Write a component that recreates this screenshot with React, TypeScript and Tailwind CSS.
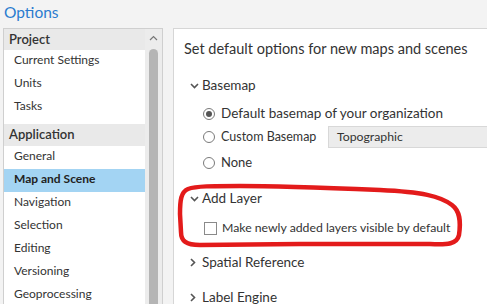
import React from 'react';

const navGroups = [
  { title: 'Project', items: ['Current Settings', 'Units', 'Tasks'] },
  {
    title: 'Application',
    items: ['General', 'Map and Scene', 'Navigation', 'Selection', 'Editing', 'Versioning', 'Geoprocessing'],
  },
];

const ChevronDown = () => (
  <svg width="9" height="6" viewBox="0 0 9 6" className="shrink-0">
    <path d="M1 1 L4.5 4.5 L8 1" fill="none" stroke="#555" strokeWidth="1.6" />
  </svg>
);

const ChevronRight = () => (
  <svg width="6" height="9" viewBox="0 0 6 9" className="shrink-0">
    <path d="M1 1 L4.5 4.5 L1 8" fill="none" stroke="#555" strokeWidth="1.6" />
  </svg>
);

const Radio = ({ checked }: { checked?: boolean }) => (
  <span className="w-[12px] h-[12px] rounded-full border border-[#7a7a7a] bg-white flex items-center justify-center shrink-0">
    {checked && <span className="w-[6px] h-[6px] rounded-full bg-[#555]" />}
  </span>
);

const SectionHeader = ({ label, open }: { label: string; open?: boolean }) => (
  <div className="h-[35px] flex items-center pl-[16px] whitespace-nowrap">
    <span className="w-[12px] flex items-center">{open ? <ChevronDown /> : <ChevronRight />}</span>
    <span className="text-[13.5px] text-[#333]">{label}</span>
  </div>
);

const App: React.FC = () => {
  return (
    <div
      className="w-[487px] h-[304px] overflow-hidden bg-[#f3f3f3] relative"
      style={{ fontFamily: 'Lato, "Noto Sans", sans-serif' }}
    >
      <div className="h-[28px] pl-[4px] text-[15.5px] leading-[24px] text-[#2a7ccf]">Options</div>

      <div className="flex h-[276px]">
        {/* Left navigation */}
        <div className="w-[160px] ml-[3px] border border-[#cfcfcf] border-b-0 flex bg-white">
          <div className="flex-1 whitespace-nowrap">
            {navGroups.map((g, gi) => (
              <div key={g.title} className={gi > 0 ? 'mt-[5px]' : ''}>
                <div
                  className={`${gi === 0 ? 'h-[21px]' : 'h-[22px]'} bg-[#e9e9e9] flex items-center pl-[5px] text-[13px] font-semibold text-[#333]`}
                >
                  {g.title}
                </div>
                {g.items.map((it) => (
                  <div
                    key={it}
                    className={`h-[23px] flex items-center pl-[10px] pb-[3px] text-[12px] ${
                      it === 'Map and Scene' ? 'bg-[#a3d4f3] font-bold text-[#222]' : 'text-[#333]'
                    }`}
                  >
                    {it}
                  </div>
                ))}
              </div>
            ))}
          </div>
          <div className="w-[17px] bg-[#ececec] flex flex-col items-center">
            <svg width="9" height="6" viewBox="0 0 9 6" className="mt-[6px]">
              <path d="M1 5 L4.5 1.5 L8 5" fill="none" stroke="#777" strokeWidth="1.2" />
            </svg>
            <div className="mt-[8px] w-[9px] flex-1 bg-[#b5b5b5] rounded-t-full" />
          </div>
        </div>

        {/* Right options panel */}
        <div className="ml-[10px] flex-1 min-w-0 bg-white border-l border-t border-[#d6d6d6] overflow-hidden">
          <div className="h-[39px] flex items-center pl-[10px] text-[14.5px] text-[#333] whitespace-nowrap">
            Set default options for new maps and scenes
          </div>

          <SectionHeader label="Basemap" open />
          <div className="h-[21px] flex items-center pl-[29px] gap-[6px] text-[13.5px] text-[#333] whitespace-nowrap">
            <Radio checked />
            <span>Default basemap of your organization</span>
          </div>
          <div className="h-[26px] flex items-center pl-[29px] text-[12.5px] text-[#333] whitespace-nowrap">
            <Radio />
            <span className="ml-[6px] w-[107px] shrink-0">Custom Basemap</span>
            <div className="h-[22px] flex-1 bg-[#ececec] border border-[#d8d8d8] border-r-0 flex items-center pl-[8px] text-[12.25px]">
              Topographic
            </div>
          </div>
          <div className="h-[26px] flex items-center pl-[29px] gap-[6px] text-[13px] text-[#333]">
            <Radio />
            <span>None</span>
          </div>

          <div className="mt-[5px]">
            <SectionHeader label="Add Layer" open />
          </div>
          <div className="h-[24px] flex items-center pl-[30px] gap-[5px] text-[12.25px] text-[#333] whitespace-nowrap">
            <span className="w-[13px] h-[13px] border border-[#8a8a8a] bg-white shrink-0" />
            <span>Make newly added layers visible by default</span>
          </div>

          <div className="mt-[5px]">
            <SectionHeader label="Spatial Reference" />
          </div>
          <SectionHeader label="Label Engine" />
        </div>
      </div>

      {/* Hand-drawn highlight */}
      <svg className="absolute left-0 top-0 pointer-events-none" width="487" height="304" viewBox="0 0 487 304">
        <path
          d="M188 189 C181 192 180 200 180 214 L181 232 C181 241 186 245 200 245 L300 244 L430 244 C448 245 457 244 459 235 C461 221 460 211 452 205 C440 196 422 192 380 190 C330 188 280 186 240 186 C212 186 196 186 188 189 Z"
          fill="none"
          stroke="#e31b1b"
          strokeWidth="4.5"
          strokeLinejoin="round"
        />
      </svg>
    </div>
  );
};

export default App;
